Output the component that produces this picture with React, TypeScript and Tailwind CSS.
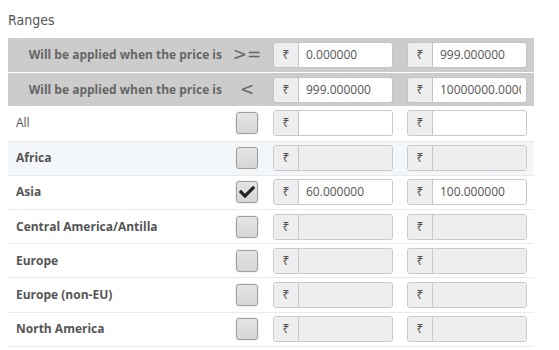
import React from "react";
import { FaCheck } from "react-icons/fa";

const sans = { fontFamily: '"Open Sans", "Noto Sans", sans-serif' };

function Group({ value, disabled, header, blank }: { value?: string; disabled?: boolean; header?: boolean; blank?: boolean }) {
  const border = header ? "border-[#c4c4c4]" : "border-[#c9c9c9]";
  return (
    <div className={`flex h-[26px] w-[120px] rounded-[3px] border ${border} overflow-hidden`}>
      <div className={`flex w-[25px] shrink-0 items-center justify-center border-r ${border} bg-[#eeeeee] text-[12px] text-[#555]`} style={{ fontFamily: '"Noto Sans", "DejaVu Sans", sans-serif' }}>
        {blank ? "" : "₹"}
      </div>
      <div className={`flex flex-1 items-center overflow-hidden pl-[7px] pr-[5px] ${disabled ? "bg-[#eeeeee]" : "bg-white"}`}>
        <div className="w-full overflow-hidden whitespace-nowrap text-[12px] text-[#555]">{value}</div>
      </div>
    </div>
  );
}

function Box({ checked }: { checked?: boolean }) {
  return (
    <div className="flex h-[22px] w-[22px] items-center justify-center rounded-[3px] border border-[#9f9f9f] bg-gradient-to-b from-[#e4e4e4] to-[#d6d6d6] ring-1 ring-[#f2f2f2]">
      {checked && <FaCheck className="text-[#222]" size={16} />}
    </div>
  );
}

const rows: { name: string; bold?: boolean; enabled?: boolean; alt?: boolean; checked?: boolean; a?: string; b?: string; partial?: boolean }[] = [
  { name: "All", bold: false, enabled: true },
  { name: "Africa", bold: true, alt: true },
  { name: "Asia", bold: true, enabled: true, checked: true, a: "60.000000", b: "100.000000" },
  { name: "Central America/Antilla", bold: true },
  { name: "Europe", bold: true },
  { name: "Europe (non-EU)", bold: true },
  { name: "North America", bold: true },
  { name: "", bold: true, partial: true },
];

export default function App() {
  return (
    <div className="h-[350px] w-[559px] overflow-hidden bg-white pl-[8px]" style={sans}>
      <div className="pt-[10px] pb-[8px] text-[14px] leading-[20px] text-[#555]" style={{ fontFamily: '"Liberation Sans Narrow", "DejaVu Sans Condensed", sans-serif' }}>
        Ranges
      </div>
      <div className="w-[526px]">
        {[
          { op: ">=", a: "0.000000", b: "999.000000" },
          { op: "<", a: "999.000000", b: "10000000.000000" },
        ].map((h, i) => (
          <div key={i} className={`flex h-[34.2px] items-center bg-[#cccccc] ${i === 1 ? "border-t border-white" : ""}`}>
            <div className="w-[220px] pr-[6px] text-right text-[12px] font-bold text-[#666]">Will be applied when the price is</div>
            <div className="flex w-[38px] justify-center text-[17px] text-[#666]" style={{ fontFamily: '"DejaVu Sans", sans-serif' }}>{h.op}</div>
            <div className="flex w-[134px] justify-center"><Group header value={h.a} /></div>
            <div className="flex w-[134px] justify-center"><Group header value={h.b} /></div>
          </div>
        ))}
        {rows.map((r, i) => (
          <div key={i} className={`flex h-[34.2px] items-center ${i > 0 ? "border-t border-[#e8ebed]" : ""} ${r.alt ? "bg-[#f4f7fa]" : "bg-white"}`}>
            <div className={`w-[220px] pl-[8px] text-[12px] text-[#555] ${r.bold ? "font-bold" : ""}`}>{r.name}</div>
            <div className="flex w-[38px] justify-center"><Box checked={r.checked} /></div>
            <div className="flex w-[134px] justify-center"><Group value={r.a} disabled={!r.enabled} blank={r.partial} /></div>
            <div className="flex w-[134px] justify-center"><Group value={r.b} disabled={!r.enabled} blank={r.partial} /></div>
          </div>
        ))}
      </div>
    </div>
  );
}
